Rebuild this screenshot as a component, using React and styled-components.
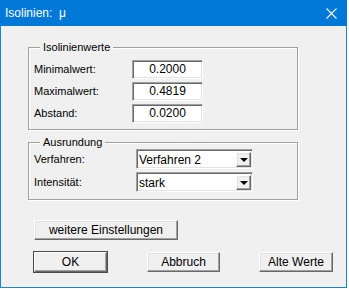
import React from "react";
import styled, { createGlobalStyle } from "styled-components";

const GlobalStyle = createGlobalStyle`
  html, body {
    margin: 0;
    padding: 0;
    background: #ffffff;
  }
  body {
    font-family: "Liberation Sans", Arial, sans-serif;
    font-size: 11px;
    color: #000;
  }
`;

const Window = styled.div`
  width: 347px;
  height: 288px;
  box-sizing: border-box;
  border: 1px solid #1783d9;
  border-top: none;
  background: #f0f0f0;
  display: flex;
  flex-direction: column;
`;

const TitleBar = styled.div`
  height: 26px;
  margin: 0 -1px;
  background: #0078d7;
  color: #fff;
  display: flex;
  align-items: center;
  justify-content: space-between;
  padding: 0 10px 0 5px;
  font-size: 12px;
`;

const Title = styled.span`
  white-space: pre;
`;

const Body = styled.div`
  display: flex;
  flex-direction: column;
  padding: 21px 0 0 27px;
`;

const Group = styled.div`
  width: 270px;
  box-sizing: border-box;
  border: 1px solid #a0a0a0;
  box-shadow: inset 1px 1px 0 #fff, 1px 1px 0 #fff;
  padding: 0 0 ${(p) => p.$pb}px 5px;
  margin-top: ${(p) => p.$mt || 0}px;
  display: flex;
  flex-direction: column;
`;

const Caption = styled.div`
  align-self: flex-start;
  margin: -7px 0 0 6px;
  padding: 0 3px;
  background: #f0f0f0;
  line-height: 13px;
`;

const Rows = styled.div`
  display: flex;
  flex-direction: column;
  gap: ${(p) => p.$gap}px;
  margin-top: ${(p) => p.$mt}px;
`;

const Row = styled.div`
  display: flex;
  align-items: center;
  height: 20px;
`;

const Label = styled.span`
  width: ${(p) => p.$w}px;
`;

const Input = styled.div`
  width: 71px;
  height: 19px;
  box-sizing: border-box;
  background: #fff;
  border: 1px solid;
  border-color: #a0a0a0 #fff #fff #a0a0a0;
  box-shadow: inset 1px 1px 0 #696969, inset -1px -1px 0 #e3e3e3;
  display: flex;
  align-items: center;
  justify-content: center;
  font-size: 12px;
`;

const Combo = styled.div`
  width: 117px;
  height: 20px;
  box-sizing: border-box;
  background: #fff;
  border: 1px solid;
  border-color: #a0a0a0 #fff #fff #a0a0a0;
  box-shadow: inset 1px 1px 0 #696969, inset -1px -1px 0 #e3e3e3;
  display: flex;
  align-items: stretch;
  padding: 2px 1px 1px 2px;
  font-size: 12px;
`;

const ComboText = styled.span`
  flex: 1;
  display: flex;
  align-items: center;
`;

const DropButton = styled.span`
  width: 15px;
  box-sizing: border-box;
  background: #f0f0f0;
  border: 1px solid;
  border-color: #fff #696969 #696969 #fff;
  box-shadow: inset -1px -1px 0 #a0a0a0, inset 1px 1px 0 #e3e3e3;
  display: flex;
  align-items: center;
  justify-content: center;
`;

const Arrow = styled.span`
  width: 0;
  height: 0;
  border-left: 4px solid transparent;
  border-right: 4px solid transparent;
  border-top: 4px solid #000;
  margin-top: 1px;
`;

const Button = styled.button`
  width: ${(p) => p.$w}px;
  height: 20px;
  box-sizing: border-box;
  margin: 0 0 0 ${(p) => p.$ml || 0}px;
  padding: 0;
  background: #f0f0f0;
  font-family: "Liberation Sans", Arial, sans-serif;
  font-size: 12px;
  color: #000;
  border: 1px solid;
  border-color: #fff #696969 #696969 #fff;
  box-shadow: ${(p) =>
    p.$default
      ? "0 0 0 1px #4a4a4a, inset -1px -1px 0 #a0a0a0"
      : "inset -1px -1px 0 #a0a0a0, inset 1px 1px 0 #e3e3e3"};
`;

const ButtonRow = styled.div`
  display: flex;
  align-items: center;
  padding-left: 6px;
  margin-top: ${(p) => p.$mt}px;
`;

const Close = () => (
  <svg width="11" height="11" viewBox="0 0 11 11">
    <path d="M0.5 0.5 L10.5 10.5 M10.5 0.5 L0.5 10.5" stroke="#fff" strokeWidth="1.1" />
  </svg>
);

const values = [
  ["Minimalwert:", "0.2000"],
  ["Maximalwert:", "0.4819"],
  ["Abstand:", "0.0200"],
];

const combos = [
  ["Verfahren:", "Verfahren 2"],
  ["Intensität:", "stark"],
];

const App = () => {
  return (
    <React.Fragment>
      <GlobalStyle />
      <Window>
        <TitleBar>
          <Title>Isolinien:  μ</Title>
          <Close />
        </TitleBar>
        <Body>
          <Group $pb={6}>
            <Caption>Isolinienwerte</Caption>
            <Rows $gap={2} $mt={5}>
              {values.map(([label, value]) => (
                <Row key={label}>
                  <Label $w={98}>{label}</Label>
                  <Input>{value}</Input>
                </Row>
              ))}
            </Rows>
          </Group>
          <Group $mt={12} $pb={7}>
            <Caption>Ausrundung</Caption>
            <Rows $gap={3} $mt={0}>
              {combos.map(([label, value]) => (
                <Row key={label}>
                  <Label $w={102}>{label}</Label>
                  <Combo>
                    <ComboText>{value}</ComboText>
                    <DropButton>
                      <Arrow />
                    </DropButton>
                  </Combo>
                </Row>
              ))}
            </Rows>
          </Group>
          <ButtonRow $mt={20}>
            <Button $w={144}>weitere Einstellungen</Button>
          </ButtonRow>
          <ButtonRow $mt={12}>
            <Button $w={73} $default>OK</Button>
            <Button $w={73} $ml={40}>Abbruch</Button>
            <Button $w={74} $ml={39}>Alte Werte</Button>
          </ButtonRow>
        </Body>
      </Window>
    </React.Fragment>
  );
};

export default App;
